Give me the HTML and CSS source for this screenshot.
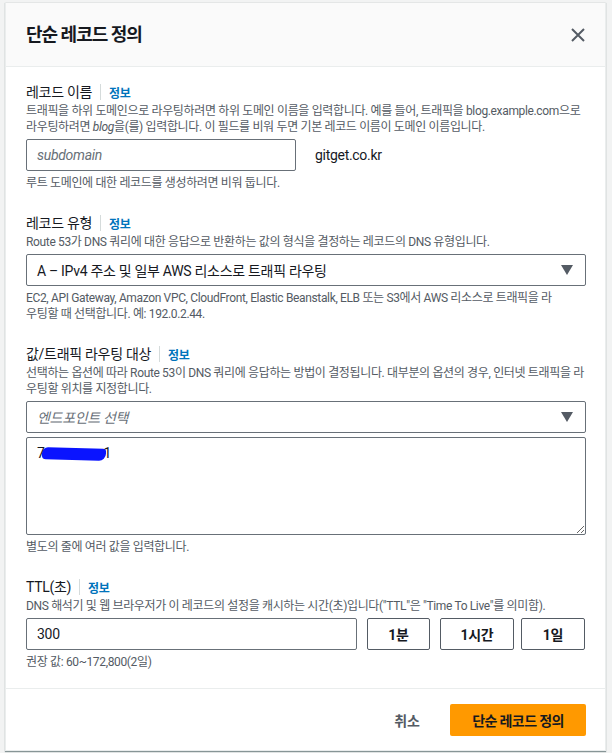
FILE: index.html
```html
<!DOCTYPE html>
<html lang="ko">
<head>
<meta charset="utf-8">
<link rel="stylesheet" href="styles.css">
</head>
<body>
<div class="modal">
  <div class="modal-header">
    <h2 class="modal-title">단순 레코드 정의</h2>
    <button class="close-btn" aria-label="닫기">
      <svg width="16" height="16" viewBox="0 0 16 16"><path d="M2 2 L14 14 M14 2 L2 14" stroke="#545b64" stroke-width="2" fill="none"/></svg>
    </button>
  </div>
  <div class="modal-body">
    <div class="field">
      <div class="label-row"><span class="label">레코드 이름</span><span class="info">정보</span></div>
      <div class="desc">트래픽을 하위 도메인으로 라우팅하려면 하위 도메인 이름을 입력합니다. 예를 들어, 트래픽을 blog.example.com으로<br>라우팅하려면 <i>blog</i>을(를) 입력합니다. 이 필드를 비워 두면 기본 레코드 이름이 도메인 이름입니다.</div>
      <div class="name-row">
        <div class="input name-input"><span class="placeholder">subdomain</span></div>
        <span class="domain">gitget.co.kr</span>
      </div>
      <div class="hint">루트 도메인에 대한 레코드를 생성하려면 비워 둡니다.</div>
    </div>

    <div class="field">
      <div class="label-row"><span class="label">레코드 유형</span><span class="info">정보</span></div>
      <div class="desc">Route 53가 DNS 쿼리에 대한 응답으로 반환하는 값의 형식을 결정하는 레코드의 DNS 유형입니다.</div>
      <div class="select"><span>A – IPv4 주소 및 일부 AWS 리소스로 트래픽 라우팅</span><span class="caret"></span></div>
      <div class="hint">EC2, API Gateway, Amazon VPC, CloudFront, Elastic Beanstalk, ELB 또는 S3에서 AWS 리소스로 트래픽을 라<br>우팅할 때 선택합니다. 예: 192.0.2.44.</div>
    </div>

    <div class="field">
      <div class="label-row"><span class="label">값/트래픽 라우팅 대상</span><span class="info">정보</span></div>
      <div class="desc">선택하는 옵션에 따라 Route 53이 DNS 쿼리에 응답하는 방법이 결정됩니다. 대부분의 옵션의 경우, 인터넷 트래픽을 라<br>우팅할 위치를 지정합니다.</div>
      <div class="select"><span class="placeholder">엔드포인트 선택</span><span class="caret"></span></div>
      <div class="textarea"><span class="value"><span class="ch">7</span><span class="redact"></span><span class="ch">1</span></span></div>
      <div class="hint">별도의 줄에 여러 값을 입력합니다.</div>
    </div>

    <div class="field">
      <div class="label-row"><span class="label">TTL(초)</span><span class="info">정보</span></div>
      <div class="desc">DNS 해석기 및 웹 브라우저가 이 레코드의 설정을 캐시하는 시간(초)입니다("TTL"은 "Time To Live"를 의미함).</div>
      <div class="ttl-row">
        <div class="input ttl-input">300</div>
        <button class="btn b-min">1분</button>
        <button class="btn b-hour">1시간</button>
        <button class="btn b-day">1일</button>
      </div>
      <div class="hint">권장 값: 60~172,800(2일)</div>
    </div>
  </div>
  <div class="modal-footer">
    <button class="link-btn">취소</button>
    <button class="primary-btn">단순 레코드 정의</button>
  </div>
</div>
</body>
</html>
```

FILE: styles.css
```css
* { box-sizing: border-box; }
html, body { margin: 0; padding: 0; }
body {
  background: #f2f3f3;
  font-family: "Roboto", "Noto Sans CJK KR", sans-serif;
  color: #16191f;
  width: 612px;
  height: 753px;
  overflow: hidden;
  padding: 2px 6px 0 5px;
  letter-spacing: -0.3px;
}
.modal {
  background: #fff;
  border: 1px solid #eaeded;
  border-top-color: #e4e6e6;
  box-shadow: 0 1px 1px #879596;
  height: 749px;
  display: flex;
  flex-direction: column;
}
.modal-header {
  height: 64px;
  background: #fafafa;
  border-bottom: 1px solid #eaeded;
  display: flex;
  align-items: center;
  justify-content: space-between;
  padding: 0 19px 0 20px;
}
.modal-title {
  margin: 0;
  font-size: 18px;
  font-weight: 700;
  line-height: 22px;
  color: #16191f;
  letter-spacing: -1px;
}
.close-btn {
  border: 0;
  background: none;
  padding: 0;
  width: 16px;
  height: 16px;
  display: flex;
}
.modal-body {
  flex: 1;
  padding: 14px 19px 0 20px;
  display: flex;
  flex-direction: column;
  gap: 21px;
}
.field { display: flex; flex-direction: column; }
.label-row {
  display: flex;
  align-items: center;
  height: 22px;
}
.label {
  font-size: 14px;
  line-height: 22px;
  color: #16191f;
  padding-right: 8px;
  border-right: 1px solid #d5dbdb;
  height: 16px;
  display: flex;
  align-items: center;
}
.info {
  font-size: 12px;
  font-weight: 700;
  color: #0073bb;
  padding-left: 8px;
}
.desc, .hint {
  font-size: 12px;
  line-height: 16px;
  color: #545b64;
  letter-spacing: -0.35px;
}
.desc { margin-bottom: 4px; }
.hint { margin-top: 4px; }
.input, .select, .textarea {
  border: 1px solid #687078;
  border-radius: 2px;
  background: #fff;
  font-size: 14px;
  height: 32px;
  display: flex;
  align-items: center;
  padding: 0 10px;
}
.placeholder { color: #687078; font-style: italic; }
.name-row { display: flex; align-items: center; gap: 19px; }
.name-input { width: 270px; }
.domain { font-size: 14px; color: #16191f; }
.select { justify-content: space-between; padding-right: 12px; }
.caret {
  width: 0; height: 0;
  border-left: 6px solid transparent;
  border-right: 6px solid transparent;
  border-top: 10px solid #545b64;
}
.textarea {
  margin-top: 4px;
  height: 98px;
  align-items: flex-start;
  padding: 6px 10px;
  resize: both;
  overflow: hidden;
}
.value { display: inline-flex; align-items: center; line-height: 18px; }
.ch { position: relative; z-index: 1; }
.redact {
  display: inline-block;
  width: 64px;
  height: 12px;
  background: #0a14ff;
  border-radius: 6px 3px 7px 4px;
  transform: rotate(1.5deg) translateY(1px);
  margin: 0 -2px 0 -3px;
}
.ttl-row { display: flex; gap: 10px; }
.ttl-input { width: 331px; }
.btn {
  height: 32px;
  border: 1px solid #545b64;
  border-radius: 2px;
  background: #fff;
  font-family: inherit;
  font-size: 14px;
  font-weight: 700;
  color: #16191f;
  padding: 0;
  letter-spacing: -0.3px;
}
.b-min { width: 63px; }
.b-hour { width: 74px; }
.b-day { width: 64px; margin-left: -3px; }
.modal-footer {
  height: 62px;
  border-top: 1px solid #eaeded;
  display: flex;
  align-items: center;
  justify-content: flex-end;
  padding: 0 19px 0 20px;
  gap: 10px;
}
.link-btn {
  border: 0;
  background: none;
  font-family: inherit;
  font-size: 14px;
  font-weight: 700;
  color: #545b64;
  padding: 0 20px;
  height: 32px;
}
.primary-btn {
  width: 136px;
  height: 32px;
  border: 0;
  border-radius: 2px;
  background: #ff9900;
  font-family: inherit;
  font-size: 14px;
  font-weight: 700;
  color: #16191f;
  letter-spacing: -0.6px;
}
```
